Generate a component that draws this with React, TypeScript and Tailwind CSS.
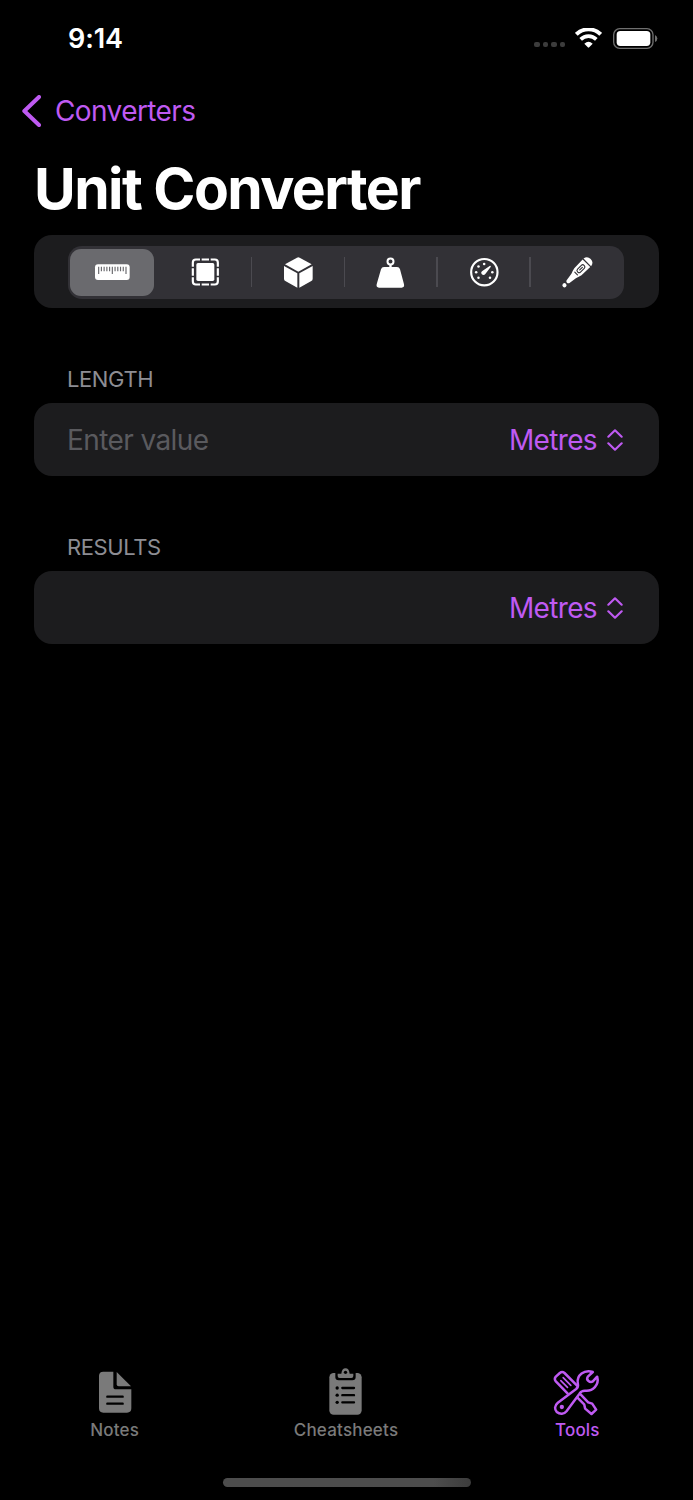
import type { ReactNode } from 'react'

function StatusBar() {
  return (
    <div className="flex h-[76px] items-center justify-between pl-[68px] pr-[35px]">
      <span className="text-[27px] font-semibold leading-none tracking-[-0.1px] text-white">9:14</span>
      <div className="flex items-center">
        <div className="mt-[13px] flex gap-[3px]">
          <span className="h-[5.5px] w-[5.5px] rounded-[2px] bg-[#3c3c3c]" />
          <span className="h-[5.5px] w-[5.5px] rounded-[2px] bg-[#3c3c3c]" />
          <span className="h-[5.5px] w-[5.5px] rounded-[2px] bg-[#3c3c3c]" />
          <span className="h-[5.5px] w-[5.5px] rounded-[2px] bg-[#3c3c3c]" />
        </div>
        <svg className="ml-[10px] h-5 w-[27px]" viewBox="0 0 81 60" fill="none">
          <path d="M4 19C25-1 56-1 77 19" stroke="#fff" strokeWidth="12" />
          <path d="M17 34C30 21 51 21 64 34" stroke="#fff" strokeWidth="11" />
          <path d="M28 47Q40.500 36 53 47L42.500 58Q40.500 60 38.500 58Z" fill="#fff" />
        </svg>
        <svg className="ml-[11px] h-[21px] w-[45px]" viewBox="0 0 135 63" fill="none">
          <rect x="2" y="2" width="118" height="59" rx="18" stroke="#6f6f6f" strokeWidth="4" />
          <rect x="11" y="9" width="101" height="45" rx="11" fill="#fff" />
          <path d="M126 21Q133 24 133 31.500Q133 39 126 42Z" fill="#6f6f6f" />
        </svg>
      </div>
    </div>
  )
}

function RulerIcon() {
  return (
    <svg className="h-9 w-9" viewBox="0 0 108 108">
      <rect x="3" y="31" width="104" height="47" rx="9" fill="#fff" />
      <path
        d="M14 38V60M55 38V60M96 38V60M22.200 38V52M30.400 38V52M38.600 38V52M46.800 38V52M63.200 38V52M71.400 38V52M79.600 38V52M87.800 38V52"
        stroke="#6a6a6e"
        strokeWidth="3.500"
      />
    </svg>
  )
}

function AreaIcon() {
  return (
    <svg className="h-9 w-9" viewBox="0 0 108 108" fill="none">
      <rect x="17.500" y="16.500" width="75" height="75" rx="9" stroke="#fff" strokeWidth="6.500" />
      <path
        d="M41.500 10V98M68.500 10V98M11 40.500H99M11 67.500H99"
        stroke="#323136"
        strokeWidth="5"
      />
      <rect x="28" y="27" width="54" height="54" rx="5" fill="#fff" />
    </svg>
  )
}

function CubeIcon() {
  return (
    <svg className="h-9 w-9" viewBox="0 0 108 108" fill="#fff">
      <path d="M51 11Q55 9 59 11L95 31L55 53L15 31Z" />
      <path d="M12 36L52 58V101L16 81Q12 79 12 74Z" />
      <path d="M98 36L58 58V101L94 81Q98 79 98 74Z" />
    </svg>
  )
}

function WeightIcon() {
  return (
    <svg className="h-9 w-9" viewBox="0 0 108 108" fill="#fff">
      <circle cx="52.500" cy="22.500" r="9" fill="none" stroke="#fff" strokeWidth="6" />
      <path d="M49 31H56V39H72Q79 39 81 46L93 91Q95 101 86 101H18Q9 101 11 91L24 46Q26 39 33 39H49Z" />
    </svg>
  )
}

function GaugeIcon() {
  return (
    <svg className="h-9 w-9" viewBox="0 0 108 108" fill="#fff">
      <circle cx="55" cy="54.500" r="39.500" fill="none" stroke="#fff" strokeWidth="6.500" />
      <circle cx="54.500" cy="30" r="3.800" />
      <circle cx="37.500" cy="37.500" r="3.800" />
      <circle cx="30.500" cy="54.500" r="3.800" />
      <circle cx="37.500" cy="71.500" r="3.800" />
      <circle cx="72" cy="71.500" r="3.800" />
      <circle cx="79" cy="54.500" r="3.800" />
      <path d="M72 35Q76 35 74 39L58 60Q53 66 47.500 61Q43 55 49 51Z" />
    </svg>
  )
}

function ThermometerIcon() {
  return (
    <svg className="h-9 w-9" viewBox="0 0 108 108" fill="#fff">
      <g transform="translate(95 15) rotate(45) scale(0.95)">
        <path d="M-17 15Q-15 0 0 0Q15 0 17 15Z" />
        <path d="M-17 19H17L16 57Q14 67 10 76L6 102Q4 106 0 106Q-4 106 -6 102L-10 76Q-14 67 -16 57Z" />
        <rect x="-6.500" y="29" width="13" height="29" rx="6" fill="none" stroke="#323136" strokeWidth="3.500" />
        <path d="M0 37V49M-6 65H6" stroke="#323136" strokeWidth="3.500" strokeLinecap="round" />
        <circle cx="0" cy="117" r="6.500" />
      </g>
    </svg>
  )
}

function NotesIcon() {
  return (
    <svg className="h-12 w-12" viewBox="0 0 144 144">
      <g fill="#7a7a7a">
        <path d="M37 11H67V56Q67 64 75 64H121V121Q121 134 108 134H37Q24 134 24 121V24Q24 11 37 11Z" />
        <path d="M77 12L120 55H83Q77 55 77 49Z" />
      </g>
      <path d="M49 86H95M49 107H95" stroke="#000" strokeWidth="7" strokeLinecap="round" />
    </svg>
  )
}

function ClipboardIcon() {
  return (
    <svg className="h-12 w-12" viewBox="0 0 144 144">
      <rect x="22" y="15" width="97" height="125" rx="13" fill="#7a7a7a" />
      <path d="M40 12H101V27Q101 37 91 37H50Q40 37 40 27Z" fill="#000" />
      <path d="M47 17H58Q60 1 70.500 1Q81 1 83 17H94V24Q94 30 88 30H53Q47 30 47 24Z" fill="#7a7a7a" />
      <circle cx="70.500" cy="13" r="5" fill="#000" />
      <g fill="#000">
        <circle cx="45.500" cy="60" r="5" />
        <circle cx="45.500" cy="81.500" r="5" />
        <circle cx="45.500" cy="103" r="5" />
      </g>
      <path d="M61 60H96M61 81.500H96M61 103H96" stroke="#000" strokeWidth="7" strokeLinecap="round" />
    </svg>
  )
}

function ToolsIcon() {
  return (
    <svg
      className="h-12 w-12"
      viewBox="70.500 39 144 144"
      fill="none"
      stroke="#bf5af2"
      strokeWidth="7.500"
      strokeLinecap="round"
      strokeLinejoin="round"
    >
      {/* Screwdriver */}
      <path d="M142 91L105 54Q98 48 91 54L79 65Q73 72 79 79L114 115" />
      <path d="M94 77L114 97M101 68L124 91" strokeWidth="5" />
      <path d="M143 127L164 148L167 161L186 177L200 164L188 146L176 142L154 119" />
      {/* Wrench */}
      <path d="M190 51C165 42 140 61 145 86C147 95 145 98 140 102L85 143C74 152 75 164 82 171C91 179 104 178 111 169L150 116C154 109 158 107 166 107C190 110 210 90 203 65L190 79C182 84 168 76 175 65Z" />
      <circle cx="97" cy="156" r="6.500" fill="#bf5af2" stroke="none" />
    </svg>
  )
}

function UnitPicker() {
  return (
    <button className="flex items-center gap-[10px] text-[28px] leading-none text-[#bf5af2]">
      <span className="tracking-[-0.65px]">Metres</span>
      <svg className="h-[22px] w-4" viewBox="0 0 48 66" fill="none">
        <path
          d="M4 23L24 4L44 23M4 43L24 62L44 43"
          stroke="currentColor"
          strokeWidth="6.500"
          strokeLinecap="round"
          strokeLinejoin="round"
        />
      </svg>
    </button>
  )
}

function Segment({ divider, children }: { divider?: boolean; children: ReactNode }) {
  return (
    <div className="relative flex h-full items-center justify-center">
      {divider && <span className="absolute -left-px top-[11px] h-[30px] w-[1.500px] bg-[#4b4a50]" />}
      {children}
    </div>
  )
}

export default function App() {
  return (
    <div className="flex h-[1500px] w-[693px] flex-col bg-black font-['Inter',sans-serif]">
      <StatusBar />

      {/* Navigation */}
      <div className="flex h-[70px] items-center pl-[22px] text-[#bf5af2]">
        <svg className="h-8 w-[19px]" viewBox="0 0 57 96" fill="none">
          <path
            d="M51 6L7 48L51 90"
            stroke="currentColor"
            strokeWidth="12"
            strokeLinecap="round"
            strokeLinejoin="round"
          />
        </svg>
        <span className="ml-[14px] text-[28px] leading-none tracking-[-0.6px]">Converters</span>
      </div>
      <h1 className="flex h-[89px] items-center pl-[34px] pb-1 text-[57px] font-bold leading-none tracking-[-1.55px] text-white">
        Unit Converter
      </h1>

      <main className="flex flex-1 flex-col px-[34px]">
        <div className="flex h-[73px] items-center rounded-[18px] bg-[#1c1c1e] pl-[34px] pt-px">
          <div className="h-[53px] w-[556px] rounded-[14px] bg-[#323136]">
            <div className="-ml-[2px] grid h-full w-[557px] grid-cols-6">
              <Segment>
                <div className="flex h-[47px] w-[84px] items-center justify-center rounded-[11px] bg-[#6a6a6e]">
                  <RulerIcon />
                </div>
              </Segment>
              <Segment>
                <AreaIcon />
              </Segment>
              <Segment divider>
                <CubeIcon />
              </Segment>
              <Segment divider>
                <WeightIcon />
              </Segment>
              <Segment divider>
                <GaugeIcon />
              </Segment>
              <Segment divider>
                <ThermometerIcon />
              </Segment>
            </div>
          </div>
        </div>

        <h2 className="mt-[59px] h-9 pl-[33px] text-[22px] leading-[24px] tracking-[-0.4px] text-[#8d8d93]">
          LENGTH
        </h2>
        <div className="flex h-[73px] items-center justify-between rounded-[18px] bg-[#1c1c1e] pl-[33px] pr-9">
          <span className="text-[28px] leading-none tracking-[-0.6px] text-[#5a5a5e]">Enter value</span>
          <UnitPicker />
        </div>

        <h2 className="mt-[59px] h-9 pl-[33px] text-[22px] leading-[24px] tracking-[-0.4px] text-[#8d8d93]">
          RESULTS
        </h2>
        <div className="flex h-[73px] items-center justify-end rounded-[18px] bg-[#1c1c1e] pr-9">
          <UnitPicker />
        </div>
      </main>

      {/* Tab bar */}
      <nav className="-ml-px grid h-[110px] grid-cols-3 text-[17px] font-medium leading-none tracking-[0.2px] text-[#7a7a7a]">
        <div className="flex flex-col items-center gap-[6px]">
          <NotesIcon />
          <span>Notes</span>
        </div>
        <div className="flex flex-col items-center gap-[6px]">
          <ClipboardIcon />
          <span>Cheatsheets</span>
        </div>
        <div className="flex flex-col items-center gap-[6px] text-[#bf5af2]">
          <ToolsIcon />
          <span>Tools</span>
        </div>
      </nav>
      <div className="flex h-[22px] justify-center">
        <div className="h-[9px] w-[248px] rounded-full bg-linear-to-r from-[#4d4d4d] from-85% to-[#3c3c3c]" />
      </div>
    </div>
  )
}
